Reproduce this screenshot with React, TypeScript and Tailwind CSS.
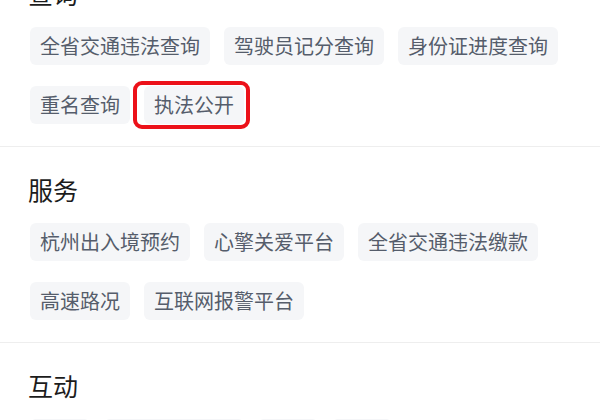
import React from "react";

type Section = { title: string; items: string[]; highlight?: string };

const sections: Section[] = [
  {
    title: "查询",
    items: ["全省交通违法查询", "驾驶员记分查询", "身份证进度查询", "重名查询", "执法公开"],
    highlight: "执法公开",
  },
  {
    title: "服务",
    items: ["杭州出入境预约", "心擎关爱平台", "全省交通违法缴款", "高速路况", "互联网报警平台"],
  },
  {
    title: "互动",
    items: ["咨询", "民意征集调查", "投诉", "建议"],
  },
];

function Chip({ label, highlight }: { label: string; highlight?: boolean }) {
  return (
    <div className="relative">
      <div className="h-[38px] px-[10px] flex items-center rounded-[6px] bg-[#f5f6f8] text-[20px] leading-[28px] text-[#555d6b] whitespace-nowrap">
        {label}
      </div>
      {highlight && (
        <div className="absolute left-[-11px] right-[-6px] top-[-5px] bottom-[-5px] border-[4px] border-[#ec1119] rounded-[9px]" />
      )}
    </div>
  );
}

export default function App() {
  return (
    <div
      className="w-[600px] h-[420px] overflow-hidden bg-white"
      style={{ fontFamily: '"Noto Sans CJK SC", "Noto Sans", sans-serif' }}
    >
      <div className="mt-[-49px]">
        {sections.map((s, i) => (
          <div
            key={s.title}
            className={
              i === 0
                ? "pt-[25px] pb-[22px] px-[30px]"
                : "border-t border-[#eeeeee] pt-[25px] pb-[22px] px-[30px]"
            }
          >
            <div className="text-[25px] leading-[34px] text-[#1c1c1c] ml-[-2px]">{s.title}</div>
            <div className="mt-[17px] flex flex-wrap gap-x-[14px] gap-y-[21px]">
              {s.items.map((it) => (
                <Chip key={it} label={it} highlight={it === s.highlight} />
              ))}
            </div>
          </div>
        ))}
      </div>
    </div>
  );
}
